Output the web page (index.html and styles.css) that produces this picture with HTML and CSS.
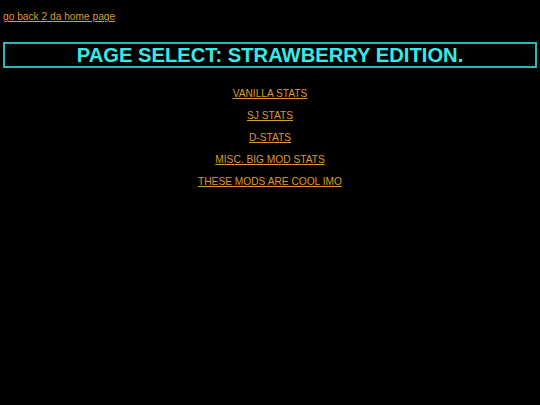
FILE: index.html
```html
<!DOCTYPE html>
<html lang="en">
<head>
  <meta charset="UTF-8" />
  <title>page select</title>
  <link rel="stylesheet" href="styles.css">
</head>
<body>

  <a class="home" href="#">go back 2 da home page</a>

  <h1 class="title">PAGE SELECT: STRAWBERRY EDITION.</h1>

  <!-- the pages -->
  <div class="pages">
    <p><a href="#">VANILLA STATS</a></p>
    <p><a href="#">SJ STATS</a></p>
    <p><a href="#">D-STATS</a></p>
    <p><a href="#">MISC. BIG MOD STATS</a></p>
    <p><a href="#">THESE MODS ARE COOL IMO</a></p>
  </div>

</body>
</html>
```

FILE: styles.css
```css
body {
  margin: 0;
  padding: 10px 3px;
  background: #000;
  font-family: "Liberation Sans", Arial, sans-serif;
  font-size: 10.2px;
}
a { color: #dc9a2c; }
.home { display: inline-block; line-height: 13px; }
.title {
  margin: 19px 0 0;
  border: 2px solid #2cb8b8;
  color: #36eaea;
  font-size: 20.2px;
  line-height: 22px;
  text-align: center;
}
.pages { text-align: center; margin-top: 19px; }
.pages p { margin: 0 0 9px; line-height: 13px; }
```
